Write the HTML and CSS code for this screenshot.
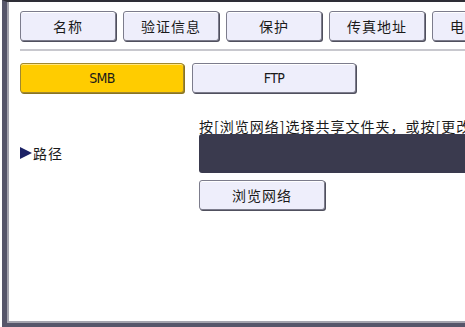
FILE: index.html
```html
<!DOCTYPE html>
<html lang="zh-CN">
<head>
<meta charset="utf-8">
<title>SMB</title>
<link rel="stylesheet" href="styles.css">
</head>
<body>
<div class="frame">
  <div class="tabs">
    <button class="btn tab">名称</button>
    <button class="btn tab">验证信息</button>
    <button class="btn tab">保护</button>
    <button class="btn tab">传真地址</button>
    <button class="btn tab">电子邮件</button>
  </div>
  <div class="sep"></div>
  <div class="protocols">
    <button class="btn proto selected">SMB</button>
    <button class="btn proto">FTP</button>
  </div>
  <div class="path-row">
    <div class="label"><span class="tri"></span>路径</div>
    <div class="field-col">
      <div class="hint">按[浏览网络]选择共享文件夹，或按[更改]输入路径。</div>
      <div class="input"></div>
      <button class="btn browse">浏览网络</button>
    </div>
  </div>
</div>
</body>
</html>
```
FILE: styles.css
```css
html, body {
  margin: 0;
  padding: 0;
  background: #ffffff;
  overflow: hidden;
}
body {
  width: 465px;
  height: 327px;
  font-family: "Noto Sans CJK SC", "Noto Sans", sans-serif;
  color: #1a1a1a;
}
.frame {
  box-sizing: border-box;
  margin-left: 2px;
  width: 600px;
  height: 327px;
  border-left: 5px solid #56566a;
  border-top: 2px solid #2e2e36;
  border-bottom: 4px solid #56566a;
  box-shadow: inset 2px 0 0 #a4a4ae, inset 0 -2px 0 #a4a4ae;
  padding: 9px 0 0 13px;
  overflow: hidden;
}
.btn {
  box-sizing: border-box;
  height: 30px;
  margin: 0;
  padding: 0;
  background: #eeeefb;
  border: 1px solid #7c7c8c;
  border-radius: 3px;
  box-shadow: 1px 1px 0 #50505e, inset 0 1px 0 #ffffff;
  font-family: "Noto Sans CJK SC", "Noto Sans", sans-serif;
  font-size: 14px;
  letter-spacing: 1px;
  color: #1a1a1a;
  flex-shrink: 0;
  white-space: nowrap;
}
.tabs {
  display: flex;
  gap: 7px;
}
.tab {
  width: 96px;
}
.sep {
  margin-top: 8px;
  height: 2px;
  background: #c8c8ce;
}
.protocols {
  display: flex;
  gap: 8px;
  margin-top: 12px;
}
.proto {
  width: 164px;
  font-family: "DejaVu Sans Condensed", "Liberation Sans Narrow", "Liberation Sans", sans-serif;
  font-size: 14px;
  letter-spacing: -0.6px;
}
.proto.selected {
  background: #ffcc00;
  border-color: #a08830;
  box-shadow: 1px 1px 0 #8a7420, inset 0 1px 0 #ffe680;
}
.path-row {
  display: grid;
  grid-template-columns: 179px 300px;
  margin-top: 26px;
}
.label {
  display: flex;
  align-items: center;
  margin-top: 26px;
  height: 16px;
  font-size: 14px;
  letter-spacing: 1px;
}
.tri {
  width: 0;
  height: 0;
  border-left: 12px solid #1c2266;
  border-top: 6px solid transparent;
  border-bottom: 6px solid transparent;
  margin-right: 1px;
}
.field-col {
  display: flex;
  flex-direction: column;
  align-items: flex-start;
}
.hint {
  font-size: 14px;
  line-height: 15px;
  letter-spacing: 1px;
  white-space: nowrap;
}
.input {
  width: 300px;
  height: 39px;
  background: #3a3a4e;
  border-radius: 3px;
}
.browse {
  margin-top: 7px;
  width: 126px;
}
```
